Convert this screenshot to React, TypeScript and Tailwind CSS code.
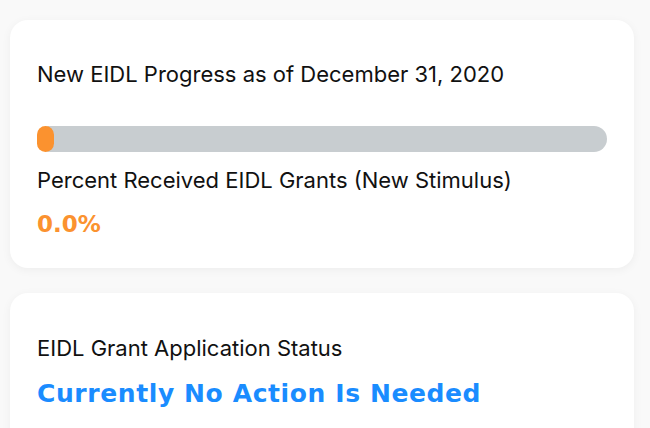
export default function App() {
  return (
    <div className="min-h-screen bg-[#f9f9f9] pl-[10px] pr-[16px] pt-[20px] font-['Inter',sans-serif] antialiased">
      <div className="flex flex-col gap-[25px]">
        <div className="rounded-[18px] bg-white px-[27px] pb-[29px] pt-[40px] shadow-[0_2px_10px_rgba(0,0,0,0.05)]">
          <div className="text-[22px] leading-[28px] text-[#111]">
            New EIDL Progress as of December 31, 2020
          </div>
          <div className="mt-[38px] h-[26px] w-full rounded-full bg-[#c8cdd0]">
            <div className="h-full w-[17px] rounded-full bg-[#fb922f]" />
          </div>
          <div className="mt-[14px] text-[22px] leading-[28px] text-[#111]">
            Percent Received EIDL Grants (New Stimulus)
          </div>
          <div className="mt-[15px] font-['DejaVu_Sans',sans-serif] text-[23px] font-bold leading-[30px] text-[#fb922f]">
            0.0%
          </div>
        </div>
        <div className="rounded-[18px] bg-white px-[27px] pb-[40px] pt-[41px] shadow-[0_2px_10px_rgba(0,0,0,0.05)]">
          <div className="text-[22px] leading-[28px] text-[#111]">
            EIDL Grant Application Status
          </div>
          <div className="mt-[17px] font-['DejaVu_Sans',sans-serif] text-[25px] font-bold leading-[30px] tracking-[0.6px] text-[#1a8cff]">
            Currently No Action Is Needed
          </div>
        </div>
      </div>
    </div>
  )
}
